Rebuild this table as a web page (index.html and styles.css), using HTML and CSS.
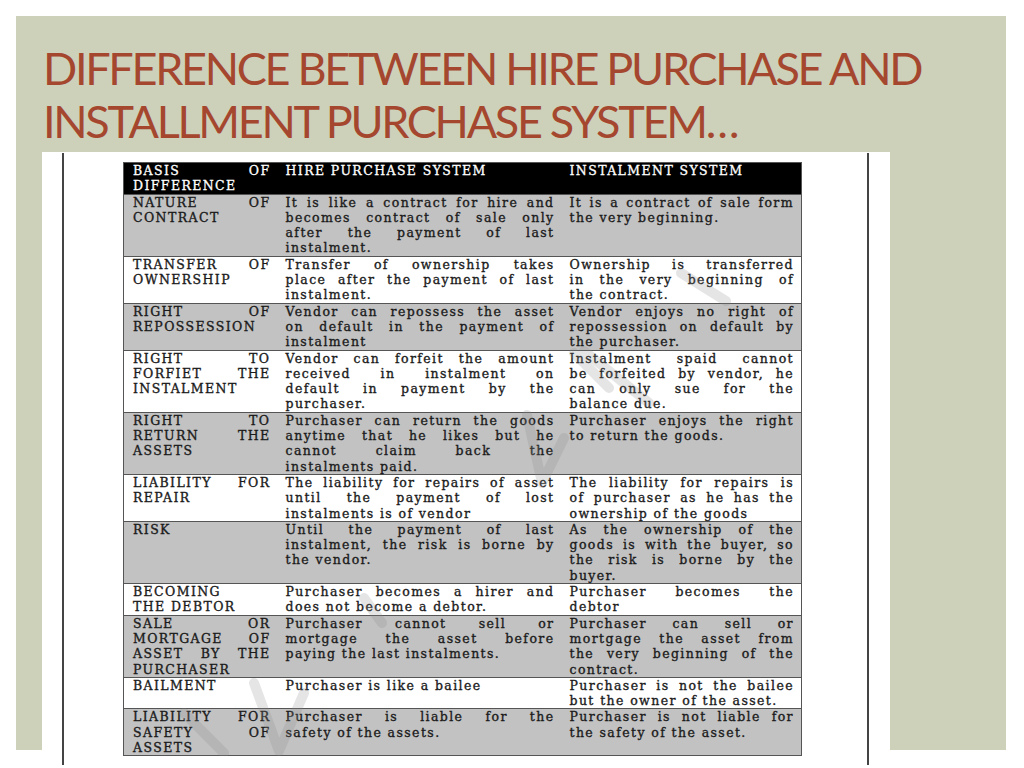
FILE: index.html
```html
<!DOCTYPE html>
<html>
<head>
<meta charset="utf-8">
<link rel="stylesheet" href="styles.css">
</head>
<body>
<div class="slide">
  <h1 class="title">DIFFERENCE BETWEEN HIRE PURCHASE AND<br>INSTALLMENT PURCHASE SYSTEM…</h1>
  <div class="pic">
    <div class="page">
      <table class="cmp">
        <colgroup><col class="c1"><col class="c2"><col class="c3"></colgroup>
        <tr class="head">
          <td><span class="j">BASIS OF</span><span>DIFFERENCE</span></td>
          <td><span>HIRE PURCHASE SYSTEM</span></td>
          <td><span>INSTALMENT SYSTEM</span></td>
        </tr>
        <tr class="g">
          <td><span class="j">NATURE OF</span><span>CONTRACT</span></td>
          <td><span class="j">It is like a contract for hire and</span><span class="j">becomes contract of sale only</span><span class="j">after the payment of last</span><span>instalment.</span></td>
          <td><span class="j">It is a contract of sale form</span><span>the very beginning.</span></td>
        </tr>
        <tr class="w">
          <td><span class="j">TRANSFER OF</span><span>OWNERSHIP</span></td>
          <td><span class="j">Transfer of ownership takes</span><span class="j">place after the payment of last</span><span>instalment.</span></td>
          <td><span class="j">Ownership is transferred</span><span class="j">in the very beginning of</span><span>the contract.</span></td>
        </tr>
        <tr class="g">
          <td><span class="j">RIGHT OF</span><span>REPOSSESSION</span></td>
          <td><span class="j">Vendor can repossess the asset</span><span class="j">on default in the payment of</span><span>instalment</span></td>
          <td><span class="j">Vendor enjoys no right of</span><span class="j">repossession on default by</span><span>the purchaser.</span></td>
        </tr>
        <tr class="w">
          <td><span class="j">RIGHT TO</span><span class="j">FORFIET THE</span><span>INSTALMENT</span></td>
          <td><span class="j">Vendor can forfeit the amount</span><span class="j">received in instalment on</span><span class="j">default in payment by the</span><span>purchaser.</span></td>
          <td><span class="j">Instalment spaid cannot</span><span class="j">be forfeited by vendor, he</span><span class="j">can only sue for the</span><span>balance due.</span></td>
        </tr>
        <tr class="g">
          <td><span class="j">RIGHT TO</span><span class="j">RETURN THE</span><span>ASSETS</span></td>
          <td><span class="j">Purchaser can return the goods</span><span class="j">anytime that he likes but he</span><span class="j">cannot claim back the</span><span>instalments paid.</span></td>
          <td><span class="j">Purchaser enjoys the right</span><span>to return the goods.</span></td>
        </tr>
        <tr class="w">
          <td><span class="j">LIABILITY FOR</span><span>REPAIR</span></td>
          <td><span class="j">The liability for repairs of asset</span><span class="j">until the payment of lost</span><span>instalments is of vendor</span></td>
          <td><span class="j">The liability for repairs is</span><span class="j">of purchaser as he has the</span><span>ownership of the goods</span></td>
        </tr>
        <tr class="g">
          <td><span>RISK</span></td>
          <td><span class="j">Until the payment of last</span><span class="j">instalment, the risk is borne by</span><span>the vendor.</span></td>
          <td><span class="j">As the ownership of the</span><span class="j">goods is with the buyer, so</span><span class="j">the risk is borne by the</span><span>buyer.</span></td>
        </tr>
        <tr class="w">
          <td><span>BECOMING</span><span>THE DEBTOR</span></td>
          <td><span class="j">Purchaser becomes a hirer and</span><span>does not become a debtor.</span></td>
          <td><span class="j">Purchaser becomes the</span><span>debtor</span></td>
        </tr>
        <tr class="g">
          <td><span class="j">SALE OR</span><span class="j">MORTGAGE OF</span><span class="j">ASSET BY THE</span><span>PURCHASER</span></td>
          <td><span class="j">Purchaser cannot sell or</span><span class="j">mortgage the asset before</span><span>paying the last instalments.</span></td>
          <td><span class="j">Purchaser can sell or</span><span class="j">mortgage the asset from</span><span class="j">the very beginning of the</span><span>contract.</span></td>
        </tr>
        <tr class="w">
          <td><span>BAILMENT</span></td>
          <td><span>Purchaser is like a bailee</span></td>
          <td><span class="j">Purchaser is not the bailee</span><span>but the owner of the asset.</span></td>
        </tr>
        <tr class="g">
          <td><span class="j">LIABILITY FOR</span><span class="j">SAFETY OF</span><span>ASSETS</span></td>
          <td><span class="j">Purchaser is liable for the</span><span>safety of the assets.</span></td>
          <td><span class="j">Purchaser is not liable for</span><span>the safety of the asset.</span></td>
        </tr>
      </table>
      <svg class="wm" width="803" height="603" viewBox="0 0 803 603">
        <g fill="none" stroke="#8a8a8a" stroke-opacity="0.22" stroke-width="10" stroke-linecap="round" stroke-linejoin="round">
          <path d="M617 120 L662 148"/>
          <path d="M510 200 L545 235 M520 198 L585 250"/>
          <path d="M463 262 L478 330 L500 285"/>
          <path d="M300 445 L318 470"/>
          <path d="M190 530 L215 598 L240 540"/>
          <path d="M120 560 L160 600"/>
        </g>
      </svg>
    </div>
  </div>
</div>
</body>
</html>
```

FILE: styles.css
```css
html, body {
  margin: 0;
  padding: 0;
  background: #ffffff;
}

body {
  min-height: 768px;
}

.slide {
  margin: 16px 0 0 16px;
  width: 990px;
  height: 734px;
  background: #cdd1ba;
  padding: 26px 0 0 0;
  box-sizing: border-box;
}

.title {
  margin: 0 0 0 27px;
  font-family: Lato, "Open Sans", sans-serif;
  font-weight: 400;
  font-size: 45px;
  line-height: 53px;
  letter-spacing: -2.3px;
  color: #a5472f;
  height: 110px;
}

.pic {
  margin-left: 26px;
  width: 848px;
  height: 616px;
  background: #ffffff;
  padding: 1px 0 0 20px;
  box-sizing: border-box;
}

.page {
  position: relative;
  height: 603px;
  border-left: 2px solid #444;
  border-right: 2px solid #444;
  padding: 9px 0 0 59px;
  box-sizing: content-box;
  width: 744px;
}

.cmp {
  border-collapse: collapse;
  table-layout: fixed;
  width: 678px;
  border: 1px solid #555;
  font-family: "DejaVu Serif", "Liberation Serif", serif;
  font-size: 12.5px;
  line-height: 15.3px;
  letter-spacing: 1.4px;
  color: #1b1b1b;
  -webkit-text-stroke: 0.35px #1b1b1b;
}

.c1 { width: 154px; }
.c2 { width: 284px; }
.c3 { width: 240px; }

.cmp td {
  vertical-align: top;
  padding: 0 7px 0 8px;
  border-top: 1px solid #555;
}

.cmp td:first-child {
  padding-left: 9px;
}

.cmp span {
  display: block;
  white-space: nowrap;
}

.cmp span.j {
  text-align: justify;
  text-align-last: justify;
}

.head td {
  background: #000000;
  color: #ffffff;
  -webkit-text-stroke: 0.3px #ffffff;
  border-top: none;
}

.g td { background: #c2c2c2; }
.w td { background: #ffffff; }

.wm {
  position: absolute;
  left: 0;
  top: 0;
  pointer-events: none;
}
```
